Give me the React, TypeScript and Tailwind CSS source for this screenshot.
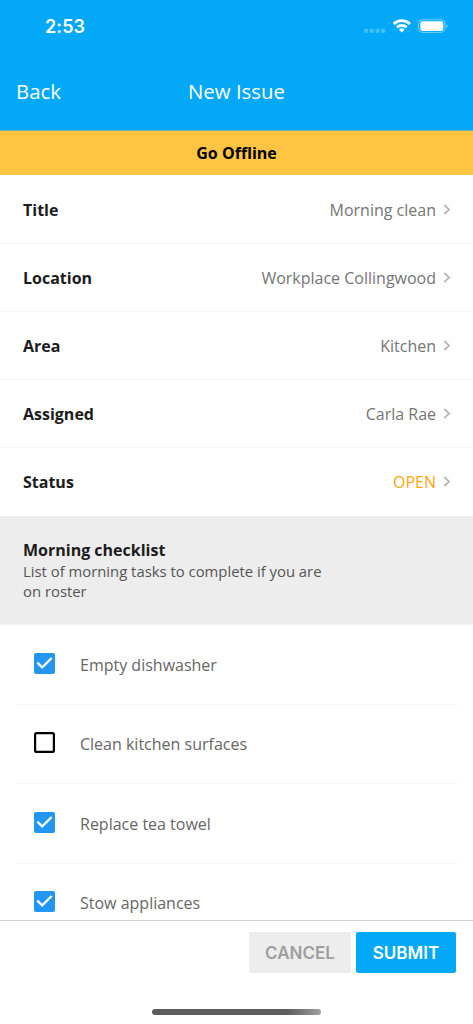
import React, { useState } from 'react';

const details = [
  { label: 'Title', value: 'Morning clean' },
  { label: 'Location', value: 'Workplace Collingwood' },
  { label: 'Area', value: 'Kitchen' },
  { label: 'Assigned', value: 'Carla Rae' },
  { label: 'Status', value: 'OPEN', highlight: true },
];

const initialTasks = [
  { name: 'Empty dishwasher', done: true },
  { name: 'Clean kitchen surfaces', done: false },
  { name: 'Replace tea towel', done: true },
  { name: 'Stow appliances', done: true },
];

function StatusBar() {
  return (
    <div className="flex h-[52px] items-center justify-between pl-[45px] pr-[25px]">
      <span className="pt-px font-['Inter',sans-serif] text-[18px] font-semibold leading-none tracking-[0.1px]">
        2:53
      </span>
      <svg width="84" height="16" viewBox="0 0 84 16" fill="none">
        <g fill="#fff" fillOpacity="0.25">
          <rect x="0" y="10.8" width="4.2" height="4.2" rx="1.4" />
          <rect x="5.7" y="10.8" width="4.2" height="4.2" rx="1.4" />
          <rect x="11.4" y="10.8" width="4.2" height="4.2" rx="1.4" />
          <rect x="17.1" y="10.8" width="4.2" height="4.2" rx="1.4" />
        </g>
        <g stroke="#fff" strokeWidth="2.7">
          <path d="M29.7 6a11.6 11.6 0 0 1 16.2 0" />
          <path d="M32.9 9.3a7 7 0 0 1 9.8 0" />
        </g>
        <path d="M35 11.7a4 4 0 0 1 5.6 0L37.8 14.6z" fill="#fff" />
        <rect x="54.6" y="1.7" width="26.3" height="12.7" rx="3.8" stroke="#fff" strokeOpacity="0.45" />
        <rect x="56.3" y="3.2" width="23" height="9.7" rx="2.3" fill="#fff" />
        <path d="M82.3 6v4.2c1.6-.7 1.6-3.5 0-4.2z" fill="#fff" fillOpacity="0.5" />
      </svg>
    </div>
  );
}

function Header() {
  return (
    <header className="h-[130px] shrink-0 bg-[#03a9f7] text-white">
      <StatusBar />
      <div className="grid h-[78px] grid-cols-3 items-center px-4 text-[20.4px]">
        <button className="text-left">Back</button>
        <h1 className="text-center">New Issue</h1>
      </div>
    </header>
  );
}

function DetailRow({ label, value, highlight }: { label: string; value: string; highlight?: boolean }) {
  return (
    <div className="flex h-[68px] items-center justify-between border-b border-[#f6f6f6] pl-[23px] pr-[22px] last:border-white">
      <span className="font-bold text-[#1c1c1c]">{label}</span>
      <div className="flex items-center gap-[7px]">
        <span className={highlight ? 'text-[#ffa50a]' : 'text-[#757575]'}>{value}</span>
        <svg width="8" height="12" viewBox="0 0 8 12" fill="none" stroke="#b8b8b8" strokeWidth="1.8">
          <path d="M1.2 1 6.2 5.5 1.2 10" />
        </svg>
      </div>
    </div>
  );
}

function Checkbox({ checked }: { checked: boolean }) {
  return (
    <svg width="21" height="21" viewBox="0 0 21 21" fill="none">
      {checked ? (
        <>
          <rect width="21" height="21" rx="2" fill="#2196f3" />
          <path d="M3.3 9.6 8.2 14.3 17.7 5" stroke="#fff" strokeWidth="2.3" />
        </>
      ) : (
        <rect x="1.1" y="1.1" width="18.8" height="18.8" rx="1.5" stroke="#000" strokeWidth="2.2" />
      )}
    </svg>
  );
}

function App() {
  const [tasks, setTasks] = useState(initialTasks);

  const toggle = (index: number) => {
    setTasks(tasks.map((task, i) => (i === index ? { ...task, done: !task.done } : task)));
  };

  return (
    <div className="flex h-screen flex-col overflow-hidden bg-white font-['Open_Sans',sans-serif] text-base">
      <Header />
      <button className="h-[45px] shrink-0 border-t border-[#64b4bb] bg-[#ffc542] text-base font-bold text-black">
        Go Offline
      </button>

      <main className="min-h-0 flex-1 overflow-hidden">
        <div className="pt-px">
          {details.map((item) => (
            <DetailRow key={item.label} {...item} />
          ))}
        </div>

        {/* Checklist heading */}
        <div className="h-[109px] border-b border-[#f3f3f3] bg-[#ededed] pl-[23px] pt-[23px]">
          <h2 className="font-bold leading-[22px] text-[#1c1c1c]">Morning checklist</h2>
          <p className="w-[310px] text-[14.85px] leading-5 text-[#555]">
            List of morning tasks to complete if you are on roster
          </p>
        </div>

        {/* Tasks */}
        <div>
          {tasks.map((task, index) => (
            <button
              key={task.name}
              onClick={() => toggle(index)}
              className="ml-4 flex h-[79.5px] w-[441px] items-center gap-[25px] border-b border-[#f6f6f6] pl-[18px] text-left"
            >
              <span className="-mt-0.5">
                <Checkbox checked={task.done} />
              </span>
              <span className="pt-px text-[#666]">{task.name}</span>
            </button>
          ))}
        </div>
      </main>

      <footer className="flex h-[104px] shrink-0 flex-col items-center justify-between border-t border-[#d4d4d4] bg-white pb-[9px] pt-[11px]">
        <div className="flex w-full justify-end gap-[5px] pr-[17px] font-['Inter',sans-serif] text-[17px] font-semibold">
          <button className="h-[41px] w-[102px] rounded-[2px] bg-[#ededed] pt-0.5 text-[#9e9e9e]">CANCEL</button>
          <button className="h-[41px] w-[100px] rounded-[2px] bg-[#03a9f7] pt-0.5 text-white">SUBMIT</button>
        </div>
        <div className="h-1.5 w-[169px] rounded-full bg-linear-to-r from-[#5c5c5c] from-80% to-[#a0a0a0]" />
      </footer>
    </div>
  );
}

export default App;
